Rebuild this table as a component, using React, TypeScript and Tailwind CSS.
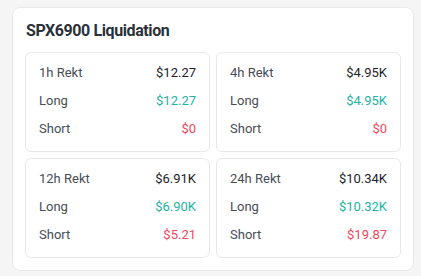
const stats = [
  { label: '1h Rekt', total: '$12.27', long: '$12.27', short: '$0' },
  { label: '4h Rekt', total: '$4.95K', long: '$4.95K', short: '$0' },
  { label: '12h Rekt', total: '$6.91K', long: '$6.90K', short: '$5.21' },
  { label: '24h Rekt', total: '$10.34K', long: '$10.32K', short: '$19.87' },
]

function Row({ label, value, color }: { label: string; value: string; color: string }) {
  return (
    <div className="flex items-center justify-between leading-5">
      <span className="text-[#474d57]">{label}</span>
      <span className={color}>{value}</span>
    </div>
  )
}

export default function App() {
  return (
    <div className="min-h-screen bg-[#f5f5f5] pt-[7px] px-3 font-['Roboto',sans-serif]">
      <div className="w-[402px] rounded-lg border border-[#e6e8ea] bg-white px-3 pt-[11px] pb-3">
        <h2 className="mb-[9px] pl-px text-[16px] leading-6 font-bold tracking-[-0.4px] text-[#2b3139]">SPX6900 Liquidation</h2>
        <div className="grid grid-cols-2 gap-[6px] text-[13px]">
          {stats.map((s) => (
            <div key={s.label} className="flex flex-col gap-2 rounded-md border border-[#e6e8ea] px-[13px] pt-[10px] pb-3">
              <Row label={s.label} value={s.total} color="text-[#1e2329]" />
              <Row label="Long" value={s.long} color="text-[#22b3a2]" />
              <Row label="Short" value={s.short} color="text-[#f6465d]" />
            </div>
          ))}
        </div>
      </div>
    </div>
  )
}
